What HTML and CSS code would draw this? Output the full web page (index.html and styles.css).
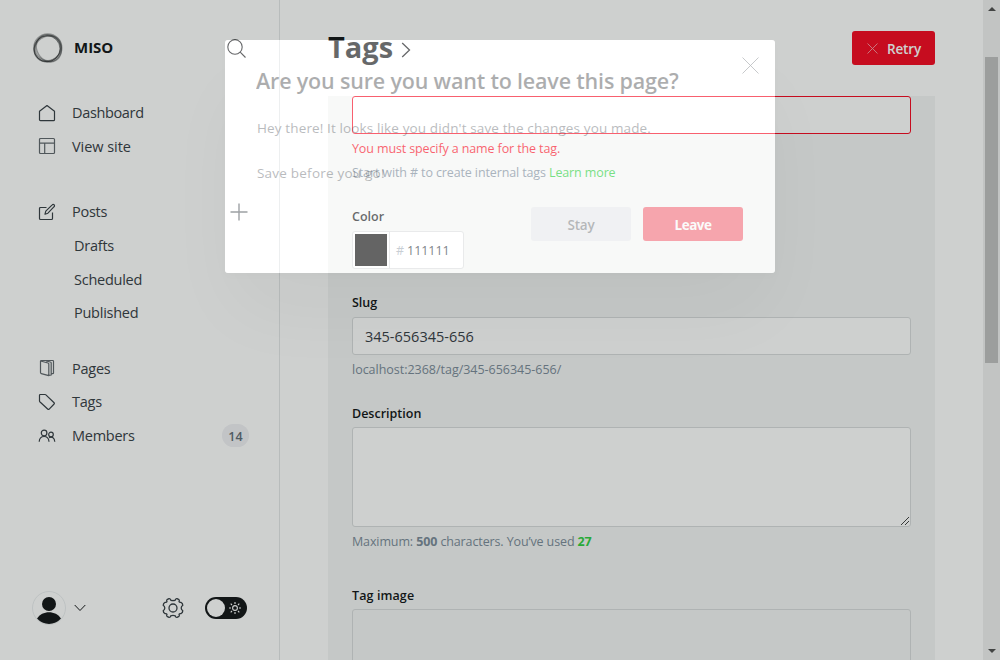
FILE: index.html
```html
<!DOCTYPE html>
<html lang="en">
<head>
<meta charset="utf-8">
<title>Tags</title>
<link rel="stylesheet" href="styles.css">
</head>
<body>
<div class="app">
  <aside class="sidebar">
    <header class="brand">
      <svg class="logo" width="32" height="32" viewBox="0 0 32 32" fill="none" stroke="#15171a">
        <circle cx="15.8" cy="16" r="13.4" stroke-width="2.6" opacity=".35"/>
        <ellipse cx="15.5" cy="16.3" rx="14" ry="12.2" stroke-width="1.5" opacity=".35" transform="rotate(-35 16 16)"/>
        <ellipse cx="16.6" cy="15.4" rx="14" ry="12" stroke-width="1.4" opacity=".35" transform="rotate(60 16 16)"/>
        <circle cx="15" cy="16.8" r="13" stroke-width="1" opacity=".5"/>
      </svg>
      <span class="site">MISO</span>
      <svg class="search" width="20" height="20" viewBox="0 0 20 20" fill="none" stroke="#15171a" stroke-width="1.1"><circle cx="8" cy="8" r="7.2"/><path d="M13.2 13.2l5.3 5.3"/></svg>
    </header>
    <nav class="nav">
      <a class="item"><svg class="ico" viewBox="0 0 18 18"><path d="M1.5 7.3 9 1.5l7.500 5.800v8.400a1 1 0 0 1-1 1h-13a1 1 0 0 1-1-1z"/></svg><span class="tight">Dashboard</span></a>
      <a class="item"><svg class="ico soft" viewBox="0 0 18 18"><rect x="1.500" y="1.500" width="15" height="15" rx="1"/><path d="M1.500 6.200h15M6.700 6.200v10.300"/></svg><span class="loose">View site</span></a>
    </nav>
    <nav class="nav posts">
      <a class="item"><svg class="ico" viewBox="0 0 18 18"><path d="M8.500 4.500h-6a1 1 0 0 0-1 1v10a1 1 0 0 0 1 1h11a1 1 0 0 0 1-1V9.500M7 11.200l.8-3 6.400-6.400a1.300 1.300 0 0 1 1.900 0 1.300 1.300 0 0 1 0 1.900L9.900 10.200z"/></svg><span>Posts</span><svg class="plus" width="18" height="18" viewBox="0 0 18 18"><path d="M9 .5v17M.5 9h17" fill="none" stroke="#394047" stroke-width="1.400"/></svg></a>
      <a class="item sub"><span>Drafts</span></a>
      <a class="item sub"><span>Scheduled</span></a>
      <a class="item sub"><span>Published</span></a>
    </nav>
    <nav class="nav">
      <a class="item"><svg class="ico soft" viewBox="0 0 18 18"><path d="M2.500 2 10 4a1 1 0 0 1 .8 1v11.600L3.300 14.600a1 1 0 0 1-.8-1zM2.500 2.300c0-.4.3-.8.8-.8h11.400c.5 0 .8.3.8.8v11.600c0 .4-.3.8-.8.8h-1.500M8 2l4.400 1a1 1 0 0 1 .8 1v12l-2.400.500"/></svg><span>Pages</span></a>
      <a class="item"><svg class="ico" viewBox="0 0 18 18"><path d="M1.500 2.300c0-.5.3-.8.8-.8h4.900c.3 0 .5.1.7.3l8.200 7.900c.4.400.4.900 0 1.300l-4.900 5.100c-.4.400-.9.400-1.300.1L1.800 8.700a1 1 0 0 1-.3-.7z"/></svg><span>Tags</span></a>
      <a class="item"><svg class="ico" viewBox="0 0 18 18"><circle cx="6.100" cy="6" r="2.800"/><path d="M1.200 14.700c.2-3.300 2-5.200 4.900-5.200s4.700 1.900 4.900 5.200"/><circle cx="13" cy="7.500" r="2.300"/><path d="M11.100 10.600c3.200-1.300 5.400.6 5.700 4.100"/></svg><span>Members</span><b class="count">14</b></a>
    </nav>
    <footer class="foot">
      <svg width="34" height="34" viewBox="0 0 34 34"><circle cx="17" cy="17" r="16.500" fill="none" stroke="#ebeef0"/><circle cx="17" cy="13" r="7" fill="#15171a"/><path d="M5 27.500c5-8.500 19-8.500 24 0A16 16 0 0 1 5 27.500z" fill="#15171a"/></svg>
      <svg class="caret" width="12" height="8" viewBox="0 0 12 8" fill="none" stroke="#15171a"><path d="M.7 1 6 6.500 11.300 1"/></svg>
      <svg class="gear" width="22" height="22" viewBox="0 0 22 22" fill="none" stroke="#394047" stroke-width="1.300" stroke-linejoin="round"><circle cx="11" cy="11" r="4"/><path d="M8.700 3.200Q8.300 1.300 7 1.600L5 2.600Q4.300 3.300 5 4.700 4.500 5.500 3.200 5.300L1.700 6.500 1.200 8.300Q2.800 9.500 2.800 11T1.200 13.700L1.700 15.500 3.200 16.700Q4.500 16.500 5 17.300 4.300 18.700 5 19.400L7 20.400Q8.300 20.700 8.700 18.800 11 17.800 13.300 18.800 13.700 20.700 15 20.400L17 19.400Q17.700 18.700 17 17.300 17.500 16.500 18.800 16.700L20.300 15.500 20.800 13.700Q19.200 12.500 19.200 11T20.800 8.300L20.300 6.500 18.800 5.300Q17.500 5.500 17 4.700 17.700 3.300 17 2.600L15 1.600Q13.700 1.300 13.300 3.200 11 4.200 8.700 3.200Z"/></svg>
      <span class="toggle"><i class="knob"></i><svg width="14" height="14" viewBox="0 0 14 14" fill="none" stroke="#fff" stroke-width="1.100"><circle cx="7" cy="7" r="2.400"/><path d="M7 1v2M7 11v2M1 7h2M11 7h2M2.700 2.700l1.300 1.300M10 10l1.300 1.300M2.700 11.300 4 10M10 4l1.300-1.300"/></svg></span>
    </footer>
  </aside>
  <main class="main">
    <header class="head">
      <h1 class="title">Tags</h1>
      <svg class="crumb" width="10" height="16" viewBox="0 0 10 16" fill="none" stroke="#15171a" stroke-width="1.300"><path d="M1.200 1 8.500 8l-7.300 7"/></svg>
      <button class="retry"><svg width="11" height="11" viewBox="0 0 11 11" stroke="#fff" stroke-width=".9" opacity=".6"><path d="M.5.500l10 10M10.500.500l-10 10"/></svg><span>Retry</span></button>
    </header>
    <section class="panel">
      <div class="input error"></div>
      <p class="note red"><span>You must specify a name for the tag.</span></p>
      <p class="note hint"><span>Start with # to create internal tags <em>Learn more</em></span></p>
      <label class="label color-label">Color</label>
      <div class="color"><span class="swatch"><i></i></span><span class="hash">#</span><span class="hex">111111</span></div>
      <label class="label slug-label">Slug</label>
      <div class="input"><span>345-656345-656</span></div>
      <p class="note url"><span>localhost:2368/tag/345-656345-656/</span></p>
      <label class="label desc-label">Description</label>
      <div class="area"><svg width="8" height="8" viewBox="0 0 8 8" stroke="#444" stroke-width="1"><path d="M0 8 8 0M4 8l4-4"/></svg></div>
      <p class="note max"><span>Maximum: <b>500</b> characters. You’ve used <b class="green">27</b></span></p>
      <label class="label image-label">Tag image</label>
      <div class="upload"></div>
    </section>
  </main>
  <div class="scrollbar"><i class="up"></i><i class="thumb"></i><i class="down"></i></div>
</div>
<div class="modal">
  <div class="modal-body">
    <header class="modal-head"><h2>Are you sure you want to leave this page?</h2><svg width="17" height="17" viewBox="0 0 17 17" stroke="#394047" stroke-width=".8"><path d="M.5.500l16 16M16.500.500l-16 16"/></svg></header>
    <p class="msg first"><span>Hey there! It looks like you didn't save the changes you made.</span></p>
    <p class="msg second"><span>Save before you go!</span></p>
    <div class="actions"><button class="stay">Stay</button><button class="leave">Leave</button></div>
  </div>
</div>
</body>
</html>
```
FILE: styles.css
```css
* { box-sizing: border-box; }
html, body { margin: 0; height: 660px; overflow: hidden; }
body { position: relative; background: #fff; color: #15171a; font-family: "Open Sans", "Noto Sans", sans-serif; font-size: 15px; }
h1, h2, p { margin: 0; }
button { border: 0; padding: 0; font: inherit; }
svg { flex: none; display: block; }
span { white-space: nowrap; }
.app { display: flex; width: 1000px; height: 660px; overflow: hidden; }

.sidebar { width: 280px; flex: none; border-right: 1px solid #e4e6e8; display: flex; flex-direction: column; }
.brand { display: flex; align-items: center; height: 32px; margin: 32px 32px 0; }
.site { font-weight: 700; font-size: 15px; line-height: 20px; margin: -2px 0 0 10px; }
.brand .search { margin: 1px 0 0 auto; }
.nav { margin-top: 32px; }
.nav.posts + .nav { margin-top: 22px; }
.item { display: flex; align-items: center; height: 33.6px; padding: 0 31px 0 38px; color: #394047; font-size: 14.5px; letter-spacing: -.25px; }
.item .tight { letter-spacing: -.35px; }
.item .loose { letter-spacing: -.05px; }
.ico { width: 18px; height: 18px; margin-right: 16px; fill: none; stroke: #394047; stroke-width: 1.2; stroke-linejoin: round; }
.soft { stroke: #62686e; }
.sub { padding-left: 74px; }
.plus { margin-left: auto; opacity: .75; }
.count { margin: 0 -1px 0 auto; width: 27px; height: 23px; line-height: 25px; border-radius: 12px; background: #f0f0f4; color: #626d79; font-size: 12.5px; font-weight: 600; letter-spacing: 0; text-align: center; }
.foot { display: flex; align-items: center; height: 34px; margin: auto 32px 35px; }
.caret { margin-left: 8px; }
.gear { margin-left: 76px; }
.toggle { display: flex; align-items: center; justify-content: space-between; width: 42px; height: 22px; margin-left: 21px; padding: 0 5px 0 2px; border-radius: 11px; background: #15171a; }
.knob { width: 18px; height: 18px; border-radius: 50%; background: #fff; }

.main { width: 703px; flex: none; padding: 31px 48px 0; }
.head { display: flex; align-items: center; height: 34px; }
.title { margin-top: -2px; font-size: 29px; line-height: 34px; font-weight: 700; }
.crumb { margin-left: 8px; margin-top: 3px; }
.retry { display: flex; align-items: center; width: 83px; height: 34px; margin-left: auto; padding-left: 15px; gap: 9px; border-radius: 3px; background: #f50b23; color: #fff; font-size: 13.5px; font-weight: 600; letter-spacing: -.15px; }
.retry span { margin-top: 2px; }
.panel { height: 700px; margin-top: 31px; padding: 0 24px; background: #f4f6f5; }
.input { display: flex; align-items: center; height: 38px; padding-left: 12px; border: 1px solid #d9dbdc; border-radius: 3px; background: #fff; color: #394047; font-size: 14.5px; }
.error { border-color: #f50b23; }
.note { height: 20px; line-height: 20px; font-size: 12.5px; color: #7c8b9a; letter-spacing: -.12px; }
.red { margin-top: 5px; color: #f50b23; }
.hint { margin-top: 4px; }
.hint em { font-style: normal; color: #30cf43; }
.label { display: block; height: 20px; line-height: 20px; font-size: 12.5px; font-weight: 600; }
.color-label { margin-top: 24px; }
.color { display: flex; align-items: center; width: 112px; height: 38px; margin-top: 4px; border: 1px solid #dddfe0; border-radius: 3px; background: #fff; font-size: 12.5px; letter-spacing: -.05px; }
.swatch { width: 37px; height: 36px; padding: 2px; border-right: 1px solid #dddfe0; }
.swatch i { display: block; width: 32px; height: 32px; background: #111; }
.hash { margin-left: 6px; color: #abb4be; }
.hex { margin-left: 3px; color: #394047; }
.slug-label { margin-top: 24px; }
.slug-label + .input { margin-top: 4px; }
.url { margin-top: 5px; letter-spacing: -.02px; }
.desc-label { margin-top: 24px; }
.area { display: flex; align-items: flex-end; justify-content: flex-end; height: 100px; margin-top: 3px; padding: 1px; border: 1px solid #d9dbdc; border-radius: 3px; background: #fff; }
.max { margin-top: 5px; }
.green { color: #30cf43; }
.image-label { margin-top: 34px; letter-spacing: .1px; }
.upload { height: 80px; margin-top: 3px; border: 1px solid #d9dbdc; border-radius: 3px; }

.scrollbar { width: 17px; flex: none; display: flex; flex-direction: column; align-items: center; background: #f1f1f1; }
.up { margin-top: 7px; border: 4px solid transparent; border-top: 0; border-bottom: 4px solid #505050; }
.thumb { width: 13px; height: 306px; margin-top: 46px; background: #c1c1c1; }
.down { margin: auto 0 7px; border: 4px solid transparent; border-bottom: 0; border-top: 4px solid #505050; }

/* The outermost shadow dims everything around the fading dialog. */
.modal { position: absolute; left: 225px; top: 40px; width: 550px; height: 233px; border-radius: 3px; background: rgba(255,255,255,.35); box-shadow: 0 3px 8px rgba(0,0,0,.015), 0 45px 80px -10px rgba(0,0,0,.04), 0 0 0 1200px rgba(10,20,15,.2); }
.modal-body { display: flex; flex-direction: column; height: 100%; padding: 17px 16px 32px 31px; opacity: .35; }
.modal-head { display: flex; justify-content: space-between; }
.modal-head h2 { margin-top: 10px; font-size: 21.5px; line-height: 28px; font-weight: 600; letter-spacing: -.18px; white-space: nowrap; }
.msg { height: 20px; line-height: 20px; padding-left: 1px; font-size: 13.5px; color: #394047; letter-spacing: .13px; }
.first { margin-top: 23px; }
.second { margin-top: 25px; letter-spacing: .22px; }
.actions { display: flex; justify-content: flex-end; gap: 12px; margin: auto 16px 0 0; }
.actions button { width: 100px; height: 34px; padding-top: 2px; border-radius: 3px; font-size: 13.5px; font-weight: 600; letter-spacing: -.2px; }
.actions .stay { background: #e3e4ea; color: #394047; }
.actions .leave { background: #f50b23; color: #fff; font-weight: 700; letter-spacing: -.5px; }
```
